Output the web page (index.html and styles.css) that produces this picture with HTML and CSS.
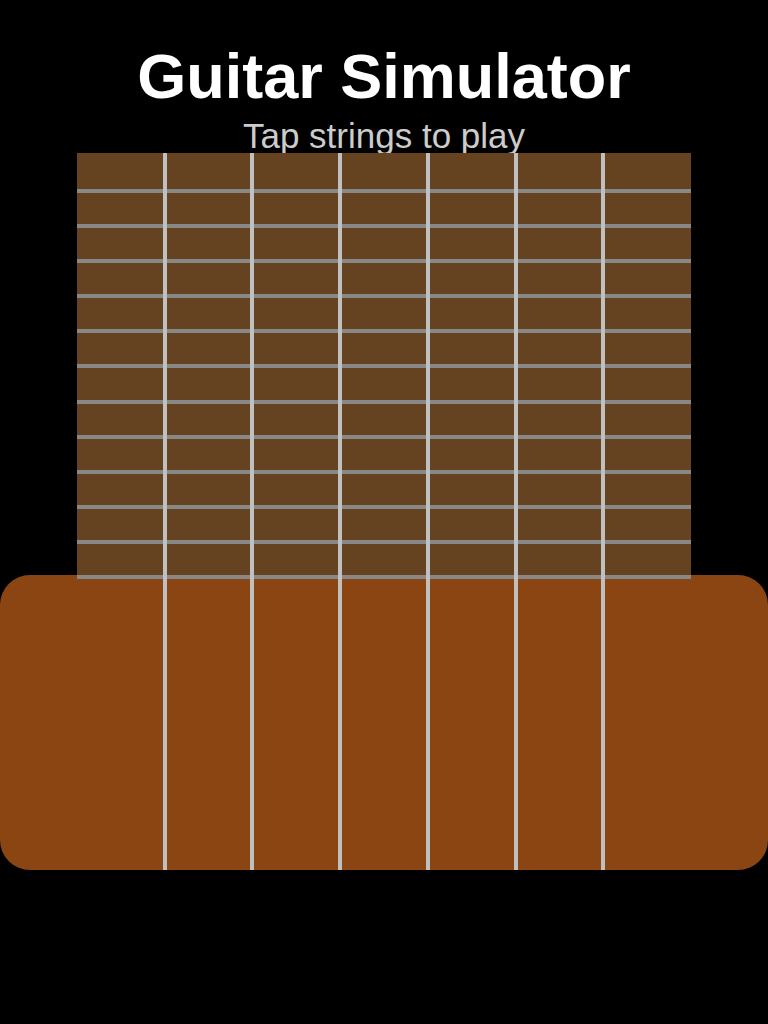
FILE: index.html
```html
<!DOCTYPE html>
<html lang="en">
<head>
<meta charset="utf-8">
<title>Guitar Simulator</title>
<link rel="stylesheet" href="styles.css">
</head>
<body>
  <header class="header">
    <h1 class="title">Guitar Simulator</h1>
    <p class="subtitle">Tap strings to play</p>
  </header>

  <main class="guitar">
    <div class="fretboard">
      <div class="fret"></div>
      <div class="fret"></div>
      <div class="fret"></div>
      <div class="fret"></div>
      <div class="fret"></div>
      <div class="fret"></div>
      <div class="fret"></div>
      <div class="fret"></div>
      <div class="fret"></div>
      <div class="fret"></div>
      <div class="fret"></div>
      <div class="fret"></div>
    </div>
    <div class="body"></div>

    <div class="strings">
      <div class="string" data-note="E2"></div>
      <div class="string" data-note="A2"></div>
      <div class="string" data-note="D3"></div>
      <div class="string" data-note="G3"></div>
      <div class="string" data-note="B3"></div>
      <div class="string" data-note="E4"></div>
    </div>
  </main>
</body>
</html>
```

FILE: styles.css
```css
* {
  box-sizing: border-box;
}

html,
body {
  margin: 0;
  padding: 0;
  background: #000;
}

body {
  width: 768px;
  height: 1024px;
  overflow: hidden;
  font-family: "Liberation Sans", Arial, sans-serif;
  color: #fff;
}

.header {
  display: flex;
  flex-direction: column;
  align-items: center;
  padding-top: 39px;
}

.title {
  margin: 0;
  font-size: 63px;
  line-height: 74px;
  font-weight: 700;
  color: #fff;
}

.subtitle {
  margin: 5px 0 0;
  font-size: 35px;
  line-height: 36px;
  color: #cccccc;
}

/* Neck + body stack, strings laid over both */
.guitar {
  position: relative;
  margin-top: -1px;
  height: 717px;
  display: flex;
  flex-direction: column;
}

.fretboard {
  position: relative;
  z-index: 1;
  width: 80%;
  height: 426px;
  margin: 0 auto;
  padding-top: 5px;
  background: #654321;
  display: flex;
  flex-direction: column;
}

.fret {
  flex: 1;
  border-bottom: 4px solid #888888;
}

.body {
  margin-top: -4px;
  height: 295px;
  background: #8b4513;
  border-radius: 30px;
}

.strings {
  position: absolute;
  z-index: 2;
  top: 0;
  bottom: 0;
  left: 10%;
  width: 80%;
  display: grid;
  grid-template-columns: repeat(7, 1fr);
}

.string {
  width: 4px;
  height: 100%;
  background: #c0c0c0;
  transform: translateX(-2px);
}

.string:first-child {
  grid-column-start: 2;
}
```
